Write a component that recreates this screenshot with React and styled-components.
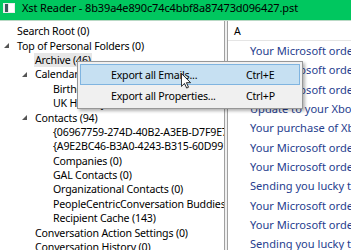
import React from "react";
import styled, { createGlobalStyle } from "styled-components";

const Global = createGlobalStyle`
  html, body { margin: 0; padding: 0; background: #fff; }
  body { font-family: "Noto Sans", "Open Sans", sans-serif; }
`;

const Window = styled.div`
  position: relative;
  width: 351px;
  height: 250px;
  overflow: hidden;
  display: flex;
  flex-direction: column;
  background: #fff;
`;

const TitleBar = styled.div`
  height: 20px;
  flex: none;
  background: #00c75f;
  display: flex;
  align-items: flex-start;
  padding: 0 0 0 3px;
  border-bottom: 1px solid #b9d9c5;
  gap: 7px;
`;

const AppIcon = styled.svg`
  margin-top: 3px;
  flex: none;
`;

const Title = styled.div`
  font-size: 11px;
  letter-spacing: -0.12px;
  line-height: 16px;
  color: #000;
  white-space: nowrap;
`;

const Main = styled.div`
  flex: 1;
  display: flex;
  min-height: 0;
`;

const TreePane = styled.div`
  width: 224px;
  flex: none;
  overflow: hidden;
  padding-top: 3px;
`;

const Splitter = styled.div`
  width: 2px;
  flex: none;
  background: #f0f0f0;
  border-left: 1px solid #a0a0a0;
  border-right: 1px solid #a0a0a0;
`;

const ListPane = styled.div`
  flex: 1;
  min-width: 0;
  overflow: hidden;
`;

const Row = styled.div`
  height: 14.4px;
  display: flex;
  align-items: center;
  padding-left: ${(p) => 4 + p.$level * 18}px;
  white-space: nowrap;
`;

const Expander = styled.span`
  width: 12px;
  flex: none;
  display: flex;
  align-items: center;
`;

const Label = styled.span`
  font-size: 10.6px;
  letter-spacing: -0.17px;
  line-height: 14px;
  color: #000;
  padding: 0 1px;
  background: ${(p) => (p.$selected ? "#e6e6e6" : "transparent")};
`;

const Header = styled.div`
  height: 19px;
  display: flex;
  align-items: center;
  padding-left: 6px;
  border-bottom: 1px solid #e5e5e5;
  font-size: 10.6px;
  color: #000;
`;

const ListRow = styled.div`
  height: 19.3px;
  display: flex;
  align-items: center;
  padding-left: 22px;
  white-space: nowrap;
  font-size: 11.1px;
  letter-spacing: 0px;
  color: #263d8e;
`;

const Menu = styled.div`
  position: absolute;
  left: 77px;
  top: 61px;
  width: 220px;
  padding: 2px;
  background: #f0f0f0;
  border: 1px solid #979797;
  box-shadow: 2px 2px 3px rgba(0, 0, 0, 0.3);
  display: flex;
  flex-direction: column;
`;

const MenuItem = styled.div`
  height: 19px;
  display: flex;
  align-items: center;
  padding-left: 30px;
  font-size: 10.6px;
  letter-spacing: -0.2px;
  color: #000;
  white-space: nowrap;
  border: 1px solid ${(p) => (p.$hot ? "#7fb4e0" : "transparent")};
  background: ${(p) => (p.$hot ? "#c6e0f2" : "transparent")};
`;

const MenuText = styled.span`
  width: 135px;
`;

const Cursor = styled.svg`
  position: absolute;
  left: 181px;
  top: 73px;
`;

const Triangle = () => (
  <svg width="5" height="5" viewBox="0 0 5 5">
    <polygon points="5,0 5,5 0,5" fill="#555" />
  </svg>
);

const tree = [
  { t: "Search Root (0)", l: 0 },
  { t: "Top of Personal Folders (0)", l: 0, e: true },
  { t: "Archive (46)", l: 1, s: true },
  { t: "Calendar (0)", l: 1, e: true },
  { t: "Birthdays (0)", l: 2 },
  { t: "UK Holidays (177)", l: 2 },
  { t: "Contacts (94)", l: 1, e: true },
  { t: "{06967759-274D-40B2-A3EB-D7F9E73727D3} (0)", l: 2 },
  { t: "{A9E2BC46-B3A0-4243-B315-60D991004455} (0)", l: 2 },
  { t: "Companies (0)", l: 2 },
  { t: "GAL Contacts (0)", l: 2 },
  { t: "Organizational Contacts (0)", l: 2 },
  { t: "PeopleCentricConversation Buddies (0)", l: 2 },
  { t: "Recipient Cache (143)", l: 2 },
  { t: "Conversation Action Settings (0)", l: 1 },
  { t: "Conversation History (0)", l: 1 },
];

const list = [
  "Your Microsoft order has been processed",
  "Your Microsoft order has been processed",
  "Your Microsoft order has been processed",
  "Update to your Xbox Live account",
  "Your purchase of Xbox Game Pass",
  "Your Microsoft order has been processed",
  "Your Microsoft order has been processed",
  "Sending you lucky thoughts",
  "Your Microsoft order has been processed",
  "Your Microsoft order has been processed",
  "Sending you lucky thoughts",
];

export default function App() {
  return (
    <Window>
      <Global />
      <TitleBar>
        <AppIcon width="12" height="10" viewBox="0 0 12 10">
          <rect x="0" y="0" width="12" height="10" fill="#e8ecec" />
          <rect x="2" y="1" width="3" height="8" fill="#3c5a5a" />
          <rect x="6" y="1" width="5" height="8" fill="#ffffff" />
        </AppIcon>
        <Title>Xst Reader - 8b39a4e890c74c4bbf8a87473d096427.pst</Title>
      </TitleBar>
      <Main>
        <TreePane>
          {tree.map((n, i) => (
            <Row key={i} $level={n.l}>
              <Expander>{n.e ? <Triangle /> : null}</Expander>
              <Label $selected={n.s}>{n.t}</Label>
            </Row>
          ))}
        </TreePane>
        <Splitter />
        <ListPane>
          <Header>A</Header>
          {list.map((t, i) => (
            <ListRow key={i}>{t}</ListRow>
          ))}
        </ListPane>
      </Main>
      <Menu>
        <MenuItem $hot>
          <MenuText>Export all Emails...</MenuText>
          <span>Ctrl+E</span>
        </MenuItem>
        <MenuItem>
          <MenuText>Export all Properties...</MenuText>
          <span>Ctrl+P</span>
        </MenuItem>
      </Menu>
      <Cursor width="10" height="16" viewBox="0 0 12 19">
        <path
          d="M0.5,0.5 L0.5,16 L4.2,12.4 L6.8,18 L9,17 L6.5,11.5 L11.5,11.5 Z"
          fill="#fff"
          stroke="#000"
          strokeWidth="1"
        />
      </Cursor>
    </Window>
  );
}
